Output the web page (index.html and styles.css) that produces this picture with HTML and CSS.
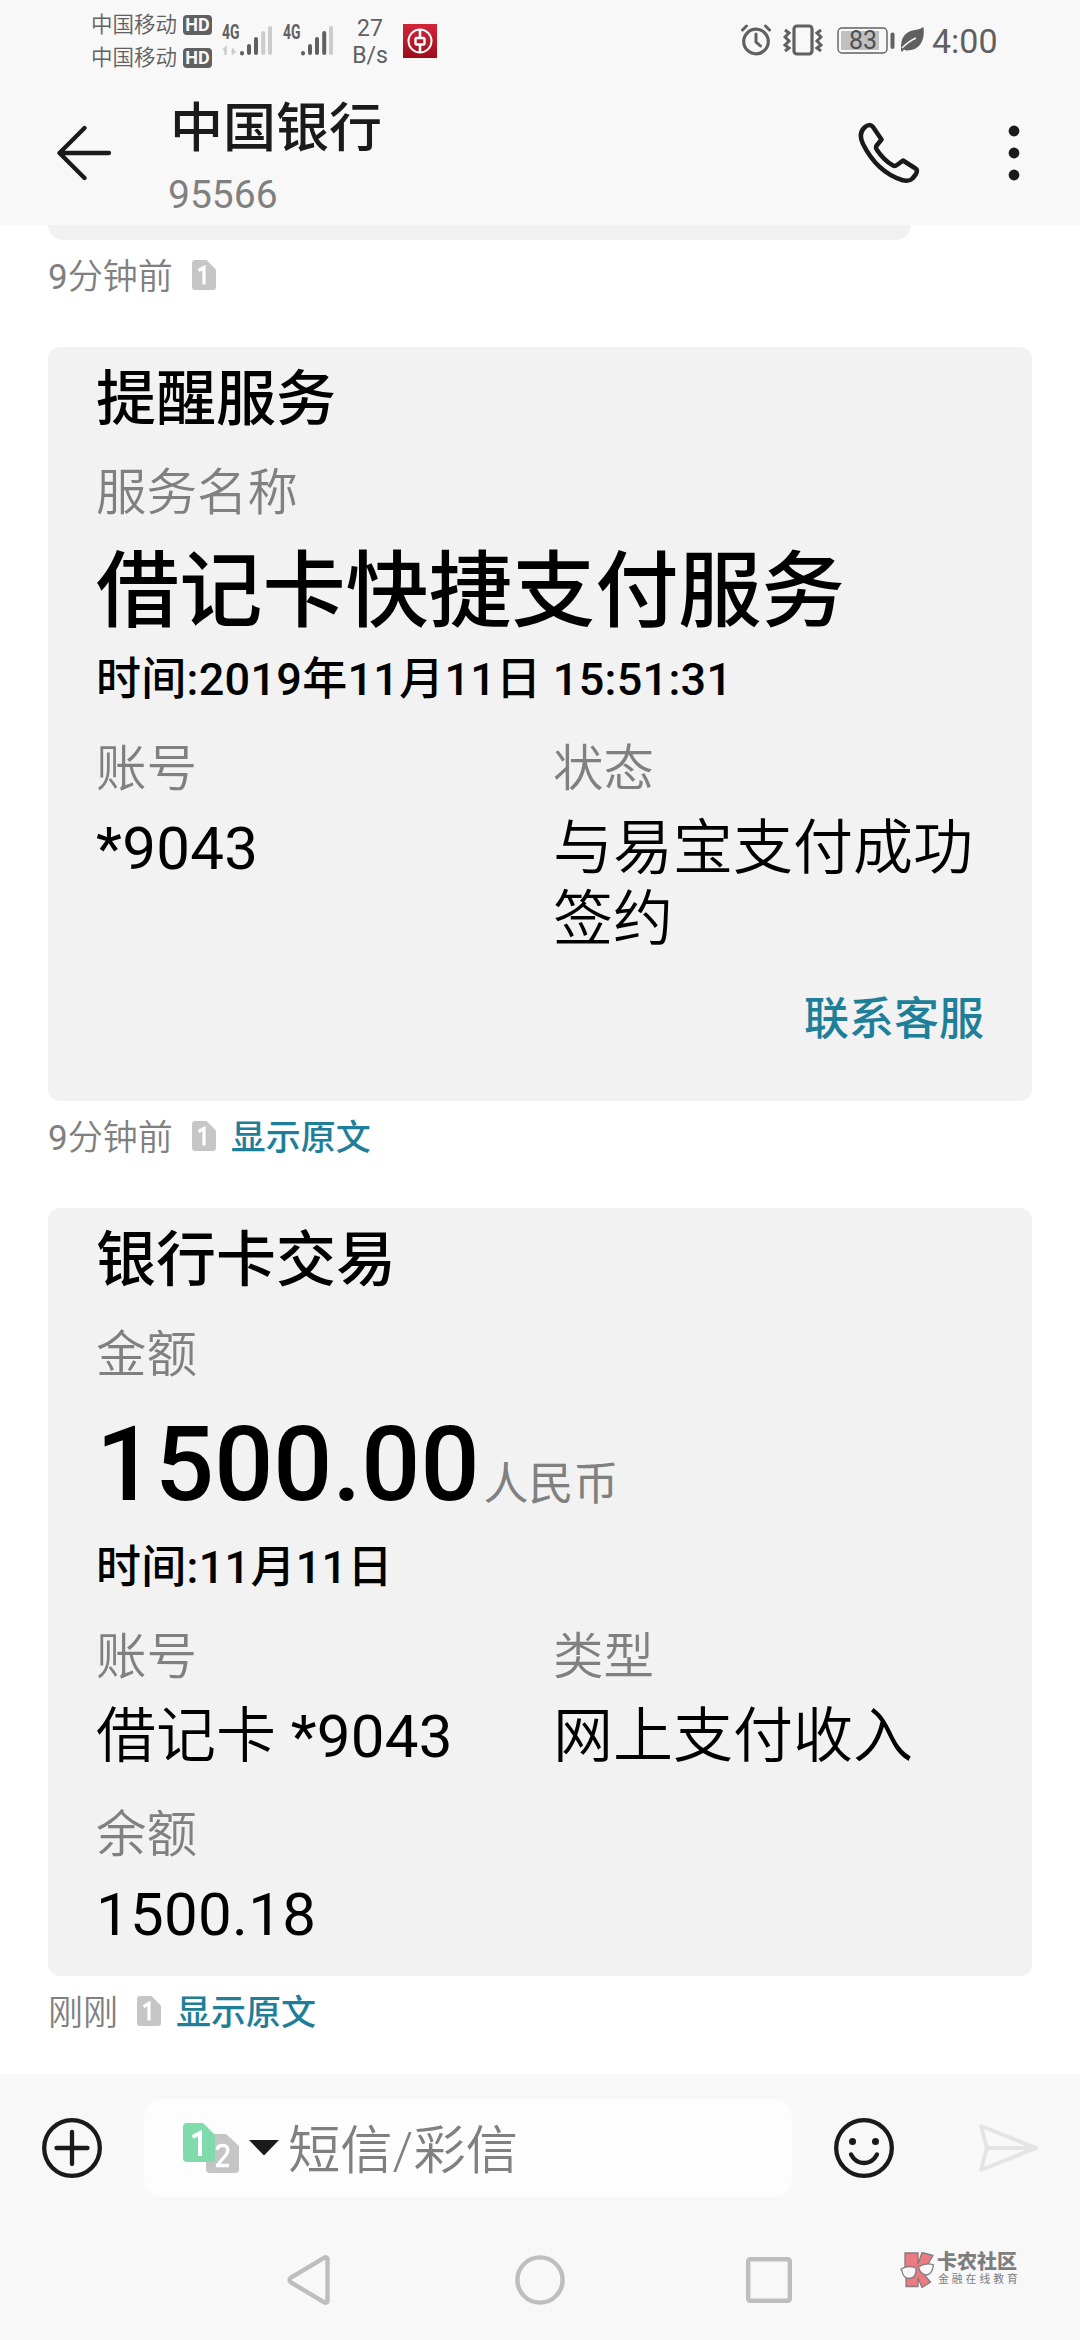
FILE: index.html
```html
<!DOCTYPE html>
<html lang="zh-CN">
<head>
<meta charset="utf-8">
<title>中国银行</title>
<link rel="stylesheet" href="styles.css">
</head>
<body>
<svg width="0" height="0" class="defs">
  <symbol id="sim" viewBox="0 0 24 30">
    <path d="M3 0H14.500L24 9.500V27Q24 30 21 30H3Q0 30 0 27V3Q0 0 3 0Z" fill="currentColor"/>
    <path d="M6.500 10.500L12 7.500V24.500" fill="none" stroke="#fff" stroke-width="3.200"/>
  </symbol>
</svg>
<header class="top">
  <div class="status">
    <div class="carriers">
      <div class="carrier">中国移动<b class="hd">HD</b></div>
      <div class="carrier">中国移动<b class="hd">HD</b></div>
    </div>
    <svg class="signal" width="52" height="42" viewBox="0 -8 52 42">
      <text x="0" y="15.500" textLength="17.500" lengthAdjust="spacingAndGlyphs" class="net">4G</text>
      <path d="M3.500 32V25M11 25.500V29" stroke="#ccc" stroke-width="2.500" fill="none"/>
      <path d="M0 27L4.700 22V27ZM9.500 28H14.500L10 32.500Z" fill="#ccc"/>
      <g stroke-width="4" stroke-linecap="round" stroke="#606060"><path d="M20 30.500V30M27 30V23M34 30V16"/><path stroke="#ccc" d="M41.200 30V10M48 30V5"/></g>
    </svg>
    <svg class="signal second" width="52" height="42" viewBox="0 -8 52 42">
      <text x="0" y="15.500" textLength="17.500" lengthAdjust="spacingAndGlyphs" class="net">4G</text>
      <g stroke-width="4" stroke-linecap="round" stroke="#606060"><path d="M20 30.500V30M27 30V23M34 30V16M41.200 30V10"/><path stroke="#ccc" d="M48 30V5"/></g>
    </svg>
    <div class="speed"><span>27</span><span>B/s</span></div>
    <svg class="boc" width="34" height="34" viewBox="0 0 34 34">
      <defs><linearGradient id="red" x2="0" y2="1"><stop stop-color="#d3263a"/><stop offset="1" stop-color="#9c0d1c"/></linearGradient></defs>
      <rect width="34" height="34" fill="url(#red)"/>
      <g fill="none" stroke="#fff" stroke-width="2"><circle cx="17" cy="17" r="11.500"/><rect x="12.500" y="14" width="9" height="6.500" rx="1" stroke-width="2.400"/><path d="M17 5V13M17 21V29" stroke-width="2.600"/></g>
    </svg>
    <svg class="alarm" width="30" height="32" viewBox="0 0 30 32">
      <g fill="none" stroke="#606060" stroke-linecap="round"><circle cx="15" cy="17.500" r="12.300" stroke-width="3.200"/><path d="M15 10V18L19.500 22" stroke-width="3"/><path d="M1.500 6L5.500 2M28.500 6L24.500 2" stroke-width="3"/></g>
    </svg>
    <svg class="vibrate" width="40" height="32" viewBox="0 0 40 32">
      <g fill="none" stroke="#606060"><rect x="11" y="2" width="18" height="28" rx="3" stroke-width="3.200"/><path d="M2 6L6 9L2 13L6 17L2 21L6 24L2 27M38 6L34 9L38 13L34 17L38 21L34 24L38 27" stroke-width="3"/></g>
    </svg>
    <svg class="battery" width="58" height="28" viewBox="0 0 58 28">
      <rect x="1" y="1" width="49" height="25" rx="4" fill="none" stroke="#606060" stroke-width="1.400"/>
      <rect x="4" y="4" width="38" height="19" fill="#c0c0c0"/>
      <path d="M55.500 7.500V20" stroke="#606060" stroke-width="4" stroke-linecap="round"/>
      <text x="26" y="22" text-anchor="middle" class="percent">83</text>
    </svg>
    <svg class="leaf" width="23" height="25" viewBox="0 0 23 25">
      <path d="M22.500 0C24 12 20 24 5 23.500L3 22.500L1 25L0 23.500C-1 9 6 4 14 3Q19 2.500 22.500 0Z" fill="#606060"/>
      <path d="M1 21Q8 14 15 11" fill="none" stroke="#f8f8f8" stroke-width="1.500"/>
    </svg>
    <span class="clock">4:00</span>
  </div>
  <div class="bar">
    <svg class="back" width="56" height="56" viewBox="0 0 56 56"><path d="M28.500 3L3.500 28L28.500 53M3.500 28H53" fill="none" stroke="#1a1a1a" stroke-width="4.300" stroke-linecap="round" stroke-linejoin="round"/></svg>
    <div class="who"><h1>中国银行</h1><p>95566</p></div>
    <svg class="phone" width="62" height="62" viewBox="0 0 62 62"><path d="M6.500 5.500Q11.500 1 15 5L23.500 17.500L18.300 24Q17.500 26 19 28Q26 38.500 35 43.500Q37 44.500 39 43L45 38.500L57.500 46.500Q60 48 58 52L54.500 56.500Q51 60 44 58Q19 50 5 22Q0 11.500 6.500 5.500Z" fill="none" stroke="#1a1a1a" stroke-width="4.500" stroke-linejoin="round"/></svg>
    <svg class="more" width="12" height="56" viewBox="0 0 12 56"><g fill="#1a1a1a"><circle cx="6" cy="6" r="5.400"/><circle cx="6" cy="28" r="5.400"/><circle cx="6" cy="50" r="5.400"/></g></svg>
  </div>
</header>
<main class="thread">
  <div class="earlier"></div>
  <div class="meta first"><span><b class="num">9</b>分钟前</span><svg class="sim"><use href="#sim"/></svg></div>
  <section class="card service">
    <h2>提醒服务</h2>
    <div class="label">服务名称</div>
    <div class="headline">借记卡快捷支付服务</div>
    <div class="time">时间:2019年11月11日 15:51:31</div>
    <div class="fields">
      <div><div class="label">账号</div><div class="value"><b class="num">*9043</b></div></div>
      <div><div class="label">状态</div><div class="value">与易宝支付成功签约</div></div>
    </div>
    <a class="contact">联系客服</a>
  </section>
  <div class="meta"><span><b class="num">9</b>分钟前</span><svg class="sim"><use href="#sim"/></svg><a>显示原文</a></div>
  <section class="card trade">
    <h2>银行卡交易</h2>
    <div class="label">金额</div>
    <div class="amount">1500.00<small>人民币</small></div>
    <div class="time">时间:11月11日</div>
    <div class="fields">
      <div><div class="label">账号</div><div class="value">借记卡 <b class="num">*9043</b></div></div>
      <div><div class="label">类型</div><div class="value">网上支付收入</div></div>
      <div class="balance"><div class="label">余额</div><div class="value"><b class="num">1500.18</b></div></div>
    </div>
  </section>
  <div class="meta last"><span>刚刚</span><svg class="sim"><use href="#sim"/></svg><a>显示原文</a></div>
</main>
<footer class="bottom">
  <div class="compose">
    <svg width="60" height="60" viewBox="0 0 60 60"><g fill="none" stroke="#1a1a1a" stroke-width="4.300" stroke-linecap="round"><circle cx="30" cy="30" r="27.800"/><path d="M30 14V46M14.500 30H45.500"/></g></svg>
    <div class="input">
      <svg class="sims" width="57" height="50" viewBox="0 0 57 50">
        <path d="M27 11H43L56 23V46Q56 50 52 50H27Q23 50 23 46V15Q23 11 27 11Z" fill="#c5c5c5"/>
        <path d="M4 0H20L32 12V36Q32 39 29 39H4Q0 39 0 35V4Q0 0 4 0Z" fill="#7fdbab"/>
        <path d="M9.500 14L17 10V33" fill="none" stroke="#fff" stroke-width="4"/>
        <path d="M34 27Q34.500 22.500 39.500 22.500Q45 22.500 44.800 27.500Q44.600 30 42.500 32.500L34.500 42V42.500H46" fill="none" stroke="#fff" stroke-width="3.300"/>
      </svg>
      <svg class="caret" width="30" height="16" viewBox="0 0 30 16"><path d="M0 0H30L15 15.500Z" fill="#1a1a1a"/></svg>
      <span>短信/彩信</span>
    </div>
    <svg class="smile" width="60" height="60" viewBox="0 0 60 60"><g fill="none" stroke="#1a1a1a" stroke-width="4.300" stroke-linecap="round"><circle cx="30" cy="30" r="27.800"/><path d="M17 36.500Q21.500 45 30 45T43 36.500"/></g><circle cx="18.500" cy="23.500" r="3.500" fill="#1a1a1a"/><circle cx="41.500" cy="23.500" r="3.500" fill="#1a1a1a"/></svg>
    <svg class="send" width="62" height="50" viewBox="0 0 62 50"><path d="M3 3L58 25L3 47L9 25ZM9 25H58" fill="none" stroke="#e4e4e4" stroke-width="4" stroke-linejoin="round"/></svg>
  </div>
  <nav class="nav">
    <svg width="46" height="52" viewBox="0 0 46 52"><path d="M3.500 26Q3.500 24.500 5 23.500L38.500 3.500Q41.500 2.500 41.500 5.500V46.500Q41.500 49.500 38.500 48.500L5 28.500Q3.500 27.500 3.500 26Z" fill="none" stroke="#bebebe" stroke-width="4.400"/></svg>
    <svg class="home" width="50" height="50" viewBox="0 0 50 50"><circle cx="25" cy="25" r="22.600" fill="none" stroke="#bebebe" stroke-width="4.400"/></svg>
    <svg class="recent" width="46" height="46" viewBox="0 0 46 46"><rect x="2.200" y="2.200" width="41.600" height="41.600" rx="2" fill="none" stroke="#bebebe" stroke-width="4.400"/></svg>
    <div class="brand">
      <svg width="35" height="36" viewBox="0 0 35 36">
        <g fill="#ec7a83" stroke="#807d7e" stroke-width="1.300"><path d="M5 1H18V12L22 0.500L33 3.500L26 15.500L22 20L30.500 30L22 35.500L18 26V34.500H6V25L5 15Z"/></g>
        <g fill="#f8f8f8" stroke="#807d7e" stroke-width="1.300"><path d="M1 17Q8 13 16 16Q17 26 9 26.500Q3 26 2 19Z"/><path d="M18.500 15Q26 10 33.500 13Q32 23 26 23Q20 22 18.500 15Z"/></g>
      </svg>
      <div><strong>卡农社区</strong><em>金融在线教育</em></div>
    </div>
  </nav>
</footer>
</body>
</html>
```
FILE: styles.css
```css
* { box-sizing: border-box; }
body {
  margin: 0;
  width: 1080px;
  height: 2340px;
  overflow: hidden;
  display: flex;
  flex-direction: column;
  background: #fff;
  color: #000;
  font-family: Roboto, "Noto Sans CJK SC", sans-serif;
}
h1, h2, p { margin: 0; font-weight: 400; }
svg { display: block; flex: none; }
.defs { position: absolute; }
.num { font-weight: 400; }

.top { height: 225px; flex: none; background: #f8f8f8; }
.status {
  height: 80px;
  padding-left: 91px;
  display: flex;
  align-items: flex-start;
  color: #606060;
}
.carriers { width: 122px; padding-top: 8px; }
.carrier {
  height: 33px;
  line-height: 33px;
  display: flex;
  align-items: center;
  font-size: 21.500px;
  font-weight: 350;
}
.hd {
  width: 29px;
  height: 20px;
  margin-left: 6px;
  border-radius: 4px;
  background: #606060;
  color: #f8f8f8;
  font-size: 18px;
  font-weight: 700;
  line-height: 20px;
  text-align: center;
}
.signal { margin: 15px 0 0 9px; }
.signal.second { margin-left: 9px; }
.net { font: 700 20px Roboto, sans-serif; fill: #606060; }
.speed {
  width: 40px;
  margin: 15px 0 0 15px;
  display: flex;
  flex-direction: column;
  align-items: center;
  font-size: 23px;
  line-height: 27px;
}
.boc { margin: 24px 0 0 13px; }
.alarm { margin: 24px 0 0 304px; }
.vibrate { margin: 24px 0 0 12px; }
.battery { margin: 27px 0 0 14px; }
.percent { font: 400 25px Roboto, sans-serif; fill: #505050; }
.leaf { margin: 27px 0 0 6px; }
.clock { margin: 21px 0 0 8px; font-size: 34px; line-height: 40px; }

.bar { height: 145px; display: flex; padding-left: 56px; }
.back { margin-top: 45px; }
.who { width: 690px; margin-left: 56px; padding-top: 16px; }
.who h1 { padding-left: 2px; font-size: 53px; line-height: 66px; font-weight: 500; color: #1a1a1a; }
.who p { font-size: 39px; line-height: 67px; color: #808080; }
.phone { margin-top: 42px; }
.more { margin: 45px 0 0 88px; }

.thread { height: 1849px; flex: none; padding: 0 48px; }
.earlier { width: 863px; height: 15px; border-radius: 0 0 16px 16px; background: #f1f1f1; }
.meta {
  height: 107px;
  padding-bottom: 37px;
  display: flex;
  align-items: center;
  font-size: 35px;
  line-height: 40px;
  color: #808080;
}
.meta span { padding-top: 5px; font-weight: 350; }
.meta a { margin-left: 15px; padding-top: 5px; font-weight: 500; color: #1f7f99; }
.sim { width: 24px; height: 30px; margin-left: 19px; color: #c6c6c6; }
.card { border-radius: 12px; background: #f2f2f2; padding: 4px 48px 0; }
.card h2 { height: 98px; line-height: 98px; font-size: 60px; font-weight: 500; }
.label { height: 88px; line-height: 88px; font-size: 50.500px; font-weight: 350; color: #808080; }
.headline { height: 106px; line-height: 109px; font-size: 83.200px; font-weight: 500; }
.time { height: 74px; line-height: 74px; font-size: 45px; font-weight: 500; white-space: pre; letter-spacing: 0.280px; }
.fields { display: grid; grid-template-columns: 457px 1fr; padding-top: 8px; }
.value { font-size: 60px; line-height: 71px; font-weight: 350; }
.value .num { letter-spacing: 0.300px; }
.service { height: 754px; }
.contact { display: block; text-align: right; font-size: 45px; line-height: 130px; font-weight: 500; color: #1f7f99; }
.trade { height: 768px; }
.trade h2 { height: 99px; }
.amount { height: 132px; line-height: 132px; font-size: 104px; font-weight: 500; }
.amount small { margin-left: 4px; font-size: 45px; font-weight: 400; color: #808080; }
.balance { padding-top: 19px; }

.bottom { height: 266px; background: #f8f8f8; }
.compose { display: flex; align-items: center; height: 147px; padding-left: 42px; }
.input {
  width: 648px;
  height: 98px;
  margin-left: 42px;
  padding-left: 39px;
  border-radius: 18px;
  background: #fdfdfd;
  display: flex;
  align-items: center;
  color: #808080;
  font-size: 52.300px;
  font-weight: 350;
}
.input span { padding-bottom: 3px; }
.caret { margin: 0 9px; }
.smile { margin-left: 42px; }
.send { margin-left: 84px; }
.nav { height: 118px; padding-left: 286px; display: flex; align-items: center; }
.home { margin-left: 183px; }
.recent { margin-left: 181px; }
.brand { display: flex; margin-left: 108px; margin-top: -20px; }
.brand strong, .brand em { display: block; font-style: normal; white-space: nowrap; color: #807d7e; }
.brand strong { margin-left: 2px; font-size: 20px; line-height: 21px; font-weight: 900; }
.brand em { margin-left: 3px; font-size: 10.800px; line-height: 14px; letter-spacing: 3px; }
```
